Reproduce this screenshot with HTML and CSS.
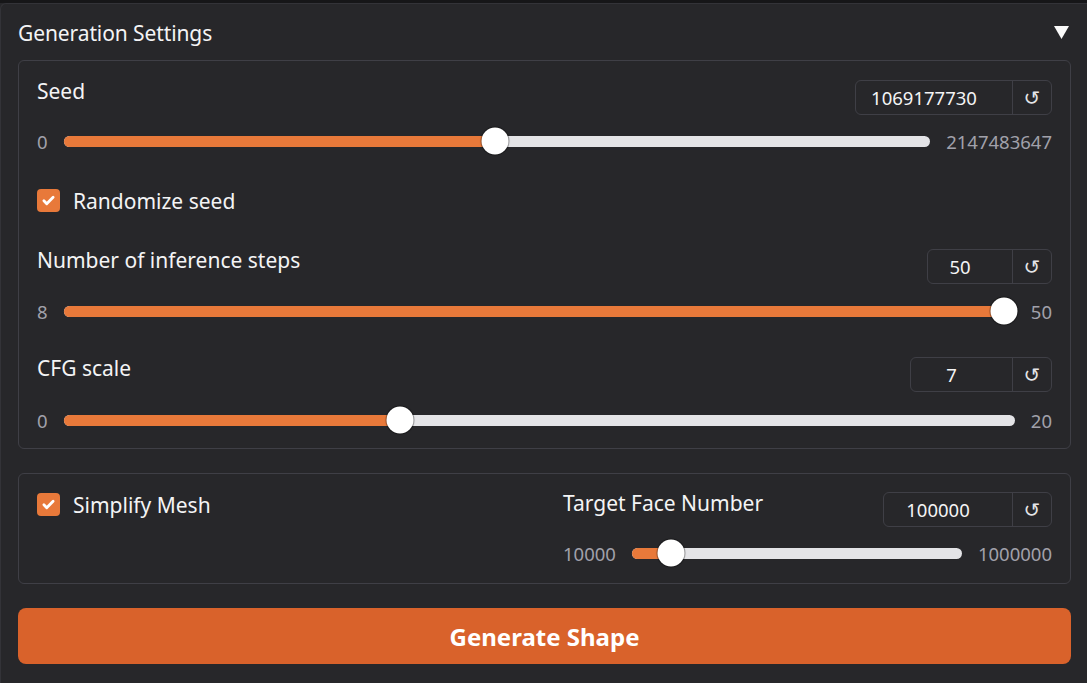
FILE: index.html
```html
<!DOCTYPE html>
<html>
<head>
<meta charset="utf-8">
<link rel="stylesheet" href="styles.css">
</head>
<body>
<div class="topbar"></div>
<div class="panel">
  <div class="panel-head">
    <span class="panel-title">Generation Settings</span>
    <svg class="caret" width="15" height="13" viewBox="0 0 15 13"><polygon points="0,0 15,0 7.5,13" fill="#fafafa"/></svg>
  </div>

  <div class="box box-main">
    <div class="field">
      <div class="field-head">
        <span class="label">Seed</span>
        <div class="numbox numbox-seed"><span class="num">1069177730</span><span class="reset">↺</span></div>
      </div>
      <div class="slider-row">
        <span class="minmax">0</span>
        <div class="track" style="--p:0.4979"><div class="fill"></div><div class="thumb"></div></div>
        <span class="minmax">2147483647</span>
      </div>
    </div>

    <label class="check check-seed"><span class="box-check"><svg viewBox="0 0 24 24" width="17" height="17"><path d="M5.5 12.5l4 4L18.5 7.5" fill="none" stroke="#fff" stroke-width="4" stroke-linecap="round" stroke-linejoin="round"/></svg></span><span class="check-label">Randomize seed</span></label>

    <div class="field field-steps">
      <div class="field-head">
        <span class="label">Number of inference steps</span>
        <div class="numbox numbox-steps"><span class="num">50</span><span class="reset">↺</span></div>
      </div>
      <div class="slider-row slider-row-steps">
        <span class="minmax">8</span>
        <div class="track" style="--p:1"><div class="fill"></div><div class="thumb"></div></div>
        <span class="minmax">50</span>
      </div>
    </div>

    <div class="field field-cfg">
      <div class="field-head">
        <span class="label">CFG scale</span>
        <div class="numbox numbox-cfg"><span class="num">7</span><span class="reset">↺</span></div>
      </div>
      <div class="slider-row slider-row-cfg">
        <span class="minmax">0</span>
        <div class="track" style="--p:0.35"><div class="fill"></div><div class="thumb"></div></div>
        <span class="minmax">20</span>
      </div>
    </div>
  </div>

  <div class="box box-mesh">
    <label class="check"><span class="box-check"><svg viewBox="0 0 24 24" width="17" height="17"><path d="M5.5 12.5l4 4L18.5 7.5" fill="none" stroke="#fff" stroke-width="4" stroke-linecap="round" stroke-linejoin="round"/></svg></span><span class="check-label">Simplify Mesh</span></label>
    <div class="field">
      <div class="field-head">
        <span class="label">Target Face Number</span>
        <div class="numbox numbox-target"><span class="num">100000</span><span class="reset">↺</span></div>
      </div>
      <div class="slider-row slider-row-tight">
        <span class="minmax">10000</span>
        <div class="track" style="--p:0.0909"><div class="fill"></div><div class="thumb"></div></div>
        <span class="minmax">1000000</span>
      </div>
    </div>
  </div>

  <button class="generate">Generate Shape</button>
</div>
</body>
</html>
```

FILE: styles.css
```css
* { box-sizing: border-box; }
html, body { margin: 0; padding: 0; }
body {
  background: #27272a;
  font-family: "Noto Sans", "Open Sans", sans-serif;
  color: #f4f4f5;
  width: 1087px;
  height: 683px;
  overflow: hidden;
}
.topbar {
  height: 3px;
  background: #161618;
}
.panel {
  background: #27272a;
  border-top: 1px solid #333338;
  border-left: 1px solid #333338;
  border-top-left-radius: 6px;
  padding: 0 16px 0 17px;
  height: 680px;
}
.panel-head {
  display: flex;
  justify-content: space-between;
  align-items: center;
  height: 56px;
  padding-top: 2px;
}
.panel-title {
  font-size: 21px;
  letter-spacing: -0.1px;
}
.caret {
  margin-right: 2px;
  margin-top: -2px;
}
.box {
  border: 1px solid #3f3f46;
  border-radius: 6px;
  padding: 19px 18px 15px 18px;
}
.box-main { display: flex; flex-direction: column; }
.field-head {
  display: flex;
  justify-content: space-between;
  align-items: flex-start;
  height: 35px;
}
.label {
  font-size: 21px;
  line-height: 22px;
}
.numbox {
  display: flex;
  height: 35px;
  border: 1px solid #3f3f46;
  border-radius: 6px;
  align-items: stretch;
}
.num {
  display: flex;
  align-items: center;
  justify-content: center;
  font-size: 18.5px;
  padding-right: 20px;
  border-right: 1px solid #3f3f46;
}
.reset {
  width: 38px;
  display: flex;
  align-items: center;
  justify-content: center;
  font-size: 20px;
  font-family: "DejaVu Sans", sans-serif;
  color: #e4e4e7;
  padding-top: 1px;
}
.numbox-seed .num { width: 157px; }
.numbox-steps .num { width: 85px; }
.numbox-cfg .num { width: 102px; }
.numbox-target .num { width: 129px; }

.slider-row {
  display: flex;
  align-items: center;
  gap: 16px;
  height: 26px;
  margin-top: 13px;
}
.slider-row-steps { margin-top: 14px; }
.slider-row-cfg { margin-top: 15px; }
.minmax {
  font-size: 18.5px;
  color: #a1a1aa;
}
.track {
  flex: 1;
  position: relative;
  height: 11px;
  border-radius: 6px;
  background: #e4e4e7;
}
.fill {
  position: absolute;
  left: 0; top: 0; bottom: 0;
  width: calc(11px + var(--p) * (100% - 22px));
  background: #e8793a;
  border-radius: 6px;
}
.thumb {
  position: absolute;
  top: 50%;
  left: calc(11px + var(--p) * (100% - 22px));
  width: 27px;
  height: 27px;
  border-radius: 50%;
  background: #fff;
  box-shadow: 0 0 0 1px rgba(0,0,0,0.25), 0 0 2px rgba(0,0,0,0.4);
  transform: translate(-50%, -50%);
}
.check {
  display: flex;
  align-items: center;
  gap: 13px;
  height: 23px;
}
.check-seed { margin-top: 35px; }
.box-check {
  width: 23px;
  height: 23px;
  border-radius: 4px;
  background: #e8793a;
  display: flex;
  align-items: center;
  justify-content: center;
}
.check-label { font-size: 21px; }
.field-steps { margin-top: 37px; }
.field-cfg { margin-top: 33px; }

.box-mesh {
  margin-top: 24px;
  display: grid;
  grid-template-columns: 1fr 489px;
  padding-top: 18px;
  padding-bottom: 17px;
}
.box-mesh .check { margin-top: 1px; }
.box-mesh .field { margin-top: 0; }
.slider-row-tight { margin-top: 13px; }

.generate {
  margin-top: 24px;
  width: 100%;
  height: 56px;
  border: none;
  border-radius: 8px;
  background: #d9622b;
  color: #fff;
  font-family: "Noto Sans", "Open Sans", sans-serif;
  font-weight: 700;
  font-size: 24px;
}
```
